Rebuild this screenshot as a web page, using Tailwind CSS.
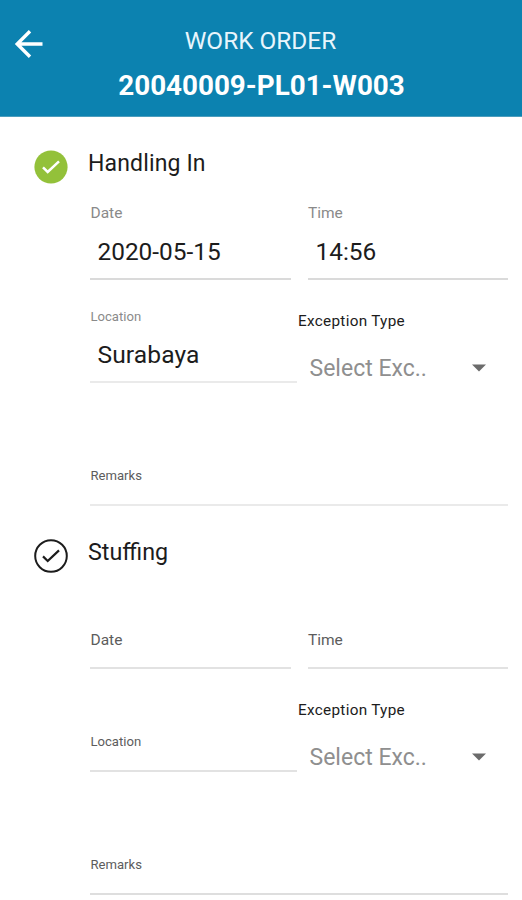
<!DOCTYPE html>
<html lang="en">
<head>
<meta charset="utf-8">
<title>Work Order</title>
<script src="https://cdn.jsdelivr.net/npm/@tailwindcss/browser@4"></script>
</head>
<body class="bg-white font-['Roboto',sans-serif] text-[#1c1c1c] w-[522px] h-[900px] overflow-hidden">
<header class="h-[117px] bg-[#0c82b0] border-b border-[#4b9dbd] text-white grid grid-cols-[58px_1fr_57px]">
  <button class="pl-[14px] pt-[29px] self-start" aria-label="Back">
    <svg class="block w-[30px] h-[30px]" viewBox="0 0 30 30" fill="none" stroke="#fff" stroke-width="3.4"><path d="M28.5 15H3.5M16 2.2L3.2 15L16 27.8"/></svg>
  </button>
  <div class="pt-[25px] text-center whitespace-nowrap">
    <p class="-ml-[2px] text-[24.4px] leading-[32px] text-[#e8f5fc]">WORK ORDER</p>
    <h1 class="mt-[9px] text-[27.8px] leading-[40px] font-bold">20040009-PL01-W003</h1>
  </div>
</header>
<main>
  <section class="h-[389px] grid grid-cols-[90px_1fr] pr-[14px]">
    <div class="pl-[34px] pt-[33px]">
      <svg class="block w-[34px] h-[34px]" viewBox="0 0 34 34" fill="none"><circle cx="17" cy="17" r="16.6" fill="#93c13a"/><path d="M9 17.4L13.7 22L25 11.4" stroke="#fff" stroke-width="2.5"/></svg>
    </div>
    <div>
      <h2 class="h-[62px] pt-[31px] -ml-[2px] text-[23px] leading-[32px] tracking-[0.15px]">Handling In</h2>
      <div class="h-[101px] grid grid-cols-[201px_200px] gap-[17px]">
        <label class="flex flex-col justify-end border-b-2 border-[#dadada] pb-[10px]">
          <span class="pl-[0.5px] text-[15.5px] leading-[20px] text-[#8a8a8a]">Date</span>
          <span class="mt-[13px] pl-[7.5px] text-[24.4px] leading-[32px]">2020-05-15</span>
        </label>
        <label class="flex flex-col justify-end border-b-2 border-[#dadada] pb-[10px]">
          <span class="text-[15.5px] leading-[20px] text-[#8a8a8a]">Time</span>
          <span class="mt-[13px] pl-[7.5px] text-[24.4px] leading-[32px]">14:56</span>
        </label>
      </div>
      <div class="h-[103px] grid grid-cols-[207px_1fr] gap-px">
        <label class="flex flex-col justify-end border-b-2 border-[#eaeaea] pb-[10px] mb-px">
          <span class="pl-[0.5px] text-[13.1px] leading-[18px] text-[#8a8a8a]">Location</span>
          <span class="mt-[13px] pl-[7.5px] text-[24.6px] leading-[32px] tracking-[0.1px]">Surabaya</span>
        </label>
        <div class="pt-[31px]">
          <p class="text-[15.3px] leading-[20px] tracking-[0.3px]">Exception Type</p>
          <div class="mt-[21px] pl-[11.5px] pr-[22px] flex items-center justify-between text-[#8f8f8f] text-[23px] leading-[32px]">
            <span class="pt-px -mb-px">Select Exc..</span>
            <svg class="block w-[14px] h-[8px]" viewBox="0 0 14 8"><path d="M0 .5H14L7 7.5Z" fill="#6b6b6b"/></svg>
          </div>
        </div>
      </div>
      <label class="h-[123px] flex flex-col justify-end border-b-2 border-[#eaeaea] pb-[19px]">
        <span class="pl-[0.5px] text-[13.1px] leading-[18px] text-[#5c5c5c]">Remarks</span>
      </label>
    </div>
  </section>
  <section class="h-[390px] grid grid-cols-[90px_1fr] pr-[14px]">
    <div class="pl-[34px] pt-[33px]">
      <svg class="block w-[34px] h-[34px]" viewBox="0 0 34 34" fill="none" stroke="#1c1c1c"><circle cx="17" cy="17" r="15.8" stroke-width="2"/><path d="M9 17.4L13.7 22L25 11.4" stroke-width="2.2"/></svg>
    </div>
    <div>
      <h2 class="h-[62px] pt-[30px] -ml-[2px] text-[23.3px] leading-[32px]">Stuffing</h2>
      <div class="h-[101px] grid grid-cols-[201px_200px] gap-[17px]">
        <label class="flex flex-col justify-end border-b-2 border-[#e2e2e2] pb-[17px]">
          <span class="pl-[0.5px] text-[15.5px] leading-[20px] text-[#5c5c5c]">Date</span>
        </label>
        <label class="flex flex-col justify-end border-b-2 border-[#e2e2e2] pb-[17px]">
          <span class="text-[15.5px] leading-[20px] text-[#5c5c5c]">Time</span>
        </label>
      </div>
      <div class="h-[103px] grid grid-cols-[207px_1fr] gap-px">
        <label class="flex flex-col justify-end border-b-2 border-[#e2e2e2] pb-[19px] mb-px">
          <span class="pl-[0.5px] text-[13.1px] leading-[18px] text-[#5c5c5c]">Location</span>
        </label>
        <div class="pt-[31px]">
          <p class="text-[15.3px] leading-[20px] tracking-[0.3px]">Exception Type</p>
          <div class="mt-[21px] pl-[11.5px] pr-[22px] flex items-center justify-between text-[#8f8f8f] text-[23px] leading-[32px]">
            <span class="pt-px -mb-px">Select Exc..</span>
            <svg class="block w-[14px] h-[8px]" viewBox="0 0 14 8"><path d="M0 .5H14L7 7.5Z" fill="#6b6b6b"/></svg>
          </div>
        </div>
      </div>
      <label class="h-[123px] flex flex-col justify-end border-b-2 border-[#dedede] pb-[19px]">
        <span class="pl-[0.5px] text-[13.1px] leading-[18px] text-[#5c5c5c]">Remarks</span>
      </label>
    </div>
  </section>
</main>
</body>
</html>
